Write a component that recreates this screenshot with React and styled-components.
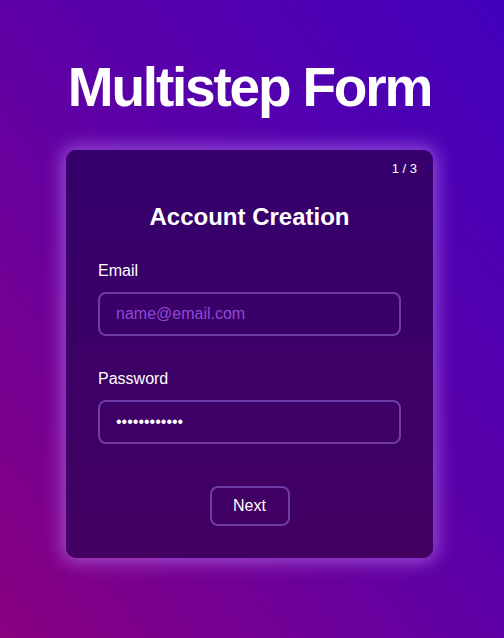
import React, { useState } from "react";
import styled, { createGlobalStyle } from "styled-components";

const Global = createGlobalStyle`
  html, body { margin: 0; padding: 0; height: 100%; }
  body {
    font-family: "Liberation Sans", Arial, sans-serif;
    background: linear-gradient(to top right, #8a0080 0%, #5e00a6 50%, #4200bb 100%);
    background-attachment: fixed;
    min-height: 638px;
  }
  #root { min-height: 638px; }
`;

const Page = styled.main`
  display: flex;
  flex-direction: column;
  align-items: center;
  padding: 55px 5px 0 0;
  min-height: 638px;
  box-sizing: border-box;
`;

const Title = styled.h1`
  margin: 0 0 31px;
  font-size: 55px;
  font-weight: 700;
  letter-spacing: -2.2px;
  color: #fff;
  line-height: 64px;
`;

const Card = styled.form`
  position: relative;
  width: 367px;
  box-sizing: border-box;
  padding: 53px 32px 32px;
  border-radius: 10px;
  background: linear-gradient(to bottom, #35006c, #430062);
  box-shadow: 0 0 18px 4px rgba(196, 140, 255, 0.55);
  display: flex;
  flex-direction: column;
`;

const Counter = styled.span`
  position: absolute;
  top: 11px;
  right: 16px;
  font-size: 13px;
  color: #fff;
`;

const Heading = styled.h2`
  margin: 0 0 31px;
  text-align: center;
  font-size: 24px;
  font-weight: 700;
  color: #fff;
`;

const Field = styled.div`
  display: flex;
  flex-direction: column;
  gap: 12px;
  margin-bottom: ${(p) => p.$mb}px;
`;

const Label = styled.label`
  font-size: 16px;
  color: #fff;
  line-height: 18px;
`;

const Input = styled.input`
  height: 44px;
  box-sizing: border-box;
  padding: 0 16px;
  border: 2px solid rgba(125, 80, 190, 0.75);
  border-radius: 8px;
  background: transparent;
  color: #fff;
  font-family: "Liberation Sans", Arial, sans-serif;
  font-size: 16px;
  outline: none;
  &::placeholder { color: #8c4ad6; }
`;

const ButtonRow = styled.div`
  display: flex;
  justify-content: center;
`;

const Button = styled.button`
  width: 80px;
  height: 40px;
  border: 2px solid rgba(125, 80, 190, 0.75);
  border-radius: 8px;
  background: transparent;
  color: #fff;
  font-family: "Liberation Sans", Arial, sans-serif;
  font-size: 16px;
  cursor: pointer;
`;

export default function App() {
  const [email, setEmail] = useState("");
  const [pw, setPw] = useState("abcdefghijkl");
  return (
    <>
      <Global />
      <Page>
        <Title>Multistep Form</Title>
        <Card onSubmit={(e) => e.preventDefault()}>
          <Counter>1 / 3</Counter>
          <Heading>Account Creation</Heading>
          <Field $mb={34}>
            <Label htmlFor="email">Email</Label>
            <Input
              id="email"
              type="email"
              placeholder="name@email.com"
              value={email}
              onChange={(e) => setEmail(e.target.value)}
            />
          </Field>
          <Field $mb={42}>
            <Label htmlFor="pw">Password</Label>
            <Input id="pw" type="password" value={pw} onChange={(e) => setPw(e.target.value)} />
          </Field>
          <ButtonRow>
            <Button type="submit">Next</Button>
          </ButtonRow>
        </Card>
      </Page>
    </>
  );
}
